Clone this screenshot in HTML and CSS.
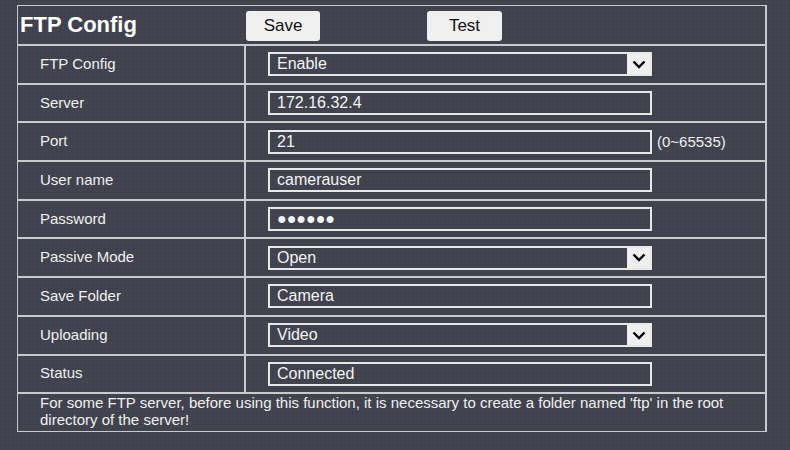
FILE: index.html
```html
<!DOCTYPE html>
<html>
<head>
<meta charset="utf-8">
<link rel="stylesheet" href="styles.css">
</head>
<body>
<div class="panel">
  <div class="head">
    <h1 class="title">FTP Config</h1>
    <button class="btn">Save</button>
    <button class="btn btn-test">Test</button>
  </div>
  <div class="row">
    <div class="label">FTP Config</div>
    <div class="value"><div class="field select"><span>Enable</span><span class="arrow"><svg width="14" height="9" viewBox="0 0 14 9"><path d="M1.5 1.5 L7 7 L12.5 1.5" fill="none" stroke="#000" stroke-width="2.4"/></svg></span></div></div>
  </div>
  <div class="row">
    <div class="label">Server</div>
    <div class="value"><div class="field"><span>172.16.32.4</span></div></div>
  </div>
  <div class="row">
    <div class="label">Port</div>
    <div class="value"><div class="field"><span>21</span></div><span class="hint">(0~65535)</span></div>
  </div>
  <div class="row">
    <div class="label">User name</div>
    <div class="value"><div class="field"><span>camerauser</span></div></div>
  </div>
  <div class="row">
    <div class="label">Password</div>
    <div class="value"><div class="field"><span class="dots">●●●●●●</span></div></div>
  </div>
  <div class="row">
    <div class="label">Passive Mode</div>
    <div class="value"><div class="field select"><span>Open</span><span class="arrow"><svg width="14" height="9" viewBox="0 0 14 9"><path d="M1.5 1.5 L7 7 L12.5 1.5" fill="none" stroke="#000" stroke-width="2.4"/></svg></span></div></div>
  </div>
  <div class="row">
    <div class="label">Save Folder</div>
    <div class="value"><div class="field"><span>Camera</span></div></div>
  </div>
  <div class="row">
    <div class="label">Uploading</div>
    <div class="value"><div class="field select"><span>Video</span><span class="arrow"><svg width="14" height="9" viewBox="0 0 14 9"><path d="M1.5 1.5 L7 7 L12.5 1.5" fill="none" stroke="#000" stroke-width="2.4"/></svg></span></div></div>
  </div>
  <div class="row">
    <div class="label">Status</div>
    <div class="value"><div class="field"><span>Connected</span></div></div>
  </div>
  <div class="note">For some FTP server, before using this function, it is necessary to create a folder named 'ftp' in the root directory of the server!</div>
</div>
</body>
</html>
```
FILE: styles.css
```css
* { box-sizing: border-box; }
html, body { margin: 0; }
body {
  width: 790px;
  height: 450px;
  overflow: hidden;
  padding: 5px 0 0 17px;
  background-color: #42444f;
  background-image:
    linear-gradient(rgba(0,0,0,0.04) 1px, transparent 1px),
    linear-gradient(90deg, rgba(0,0,0,0.04) 1px, transparent 1px);
  background-size: 4px 4px;
  font-family: "Liberation Sans", Arial, sans-serif;
  color: #f0f0f0;
}
.panel {
  width: 750px;
  border: 1px solid #c9cacd;
  border-right-width: 2px;
}
.head {
  height: 38px;
  display: flex;
  align-items: center;
}
.title {
  margin: 0;
  width: 228px;
  padding-left: 2px;
  font-size: 22px;
  font-weight: bold;
  color: #ffffff;
}
.btn {
  width: 74px;
  height: 30px;
  margin-top: 1px;
  padding: 0;
  border: 0;
  border-radius: 3px;
  background: #f0f0f0;
  color: #111;
  font-family: "Liberation Sans", Arial, sans-serif;
  font-size: 17px;
}
.btn-test {
  width: 75px;
  margin-left: 107px;
}
.row {
  height: 38.7px;
  border-top: 2px solid #c9cacd;
  display: flex;
}
.label {
  width: 228px;
  border-right: 2px solid #c9cacd;
  padding-left: 22px;
  padding-bottom: 2px;
  display: flex;
  align-items: center;
  font-size: 15px;
}
.value {
  flex: 1;
  padding-left: 22px;
  display: flex;
  align-items: center;
}
.field {
  width: 384px;
  height: 24px;
  border: 2px solid #e8e8e8;
  padding-left: 7px;
  display: flex;
  align-items: center;
  font-size: 16px;
  color: #f4f4f4;
}
.dots {
  font-size: 16px;
  letter-spacing: 0;
}
.arrow {
  margin-left: auto;
  width: 23px;
  height: 20px;
  background: #efefef;
  display: flex;
  align-items: center;
  justify-content: center;
}
.arrow svg { display: block; }
.hint {
  margin-left: 5px;
  font-size: 15px;
}
.note {
  height: 38.7px;
  border-top: 2px solid #c9cacd;
  padding: 0 20px 0 22px;
  font-size: 15px;
  line-height: 17px;
}
```
